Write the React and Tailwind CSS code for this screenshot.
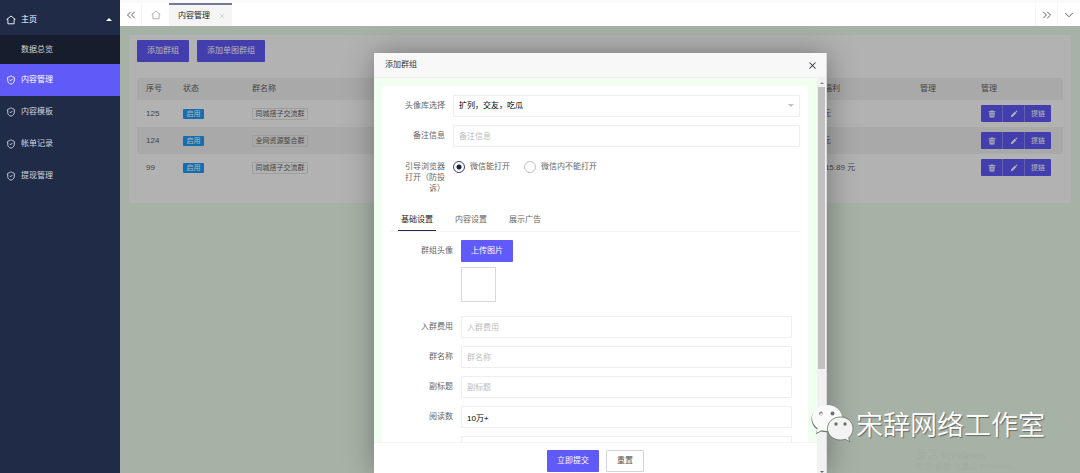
import React, { useState } from 'react'
import { ShieldCheck, ChevronsLeft, ChevronsRight, ChevronDown, X } from 'lucide-react'

const menu = ['内容管理', '内容模板', '帐单记录', '提现管理']

const rows = [
  { id: 125, name: '同城搭子交流群', money: '0 元' },
  { id: 124, name: '全网资源整合群', money: '0 元' },
  { id: 99, name: '同城搭子交流群', money: '1215.89 元' },
]

const tabs = ['基础设置', '内容设置', '展示广告']

const fields = [
  { id: 'fee', label: '入群费用', value: '' },
  { id: 'name', label: '群名称', value: '' },
  { id: 'subtitle', label: '副标题', value: '' },
  { id: 'reads', label: '阅读数', value: '10万+' },
  { id: 'likes', label: '', value: '' },
]

const inputClass = 'block h-[22px] w-full rounded-[1px] border border-[#eeeeee] bg-white px-[5px] text-black outline-none placeholder:text-[#bdbdbd]'

function HomeIcon({ className }) {
  return (
    <svg viewBox="0 0 10 10" className={className} fill="none" stroke="currentColor" strokeWidth="0.9" strokeLinejoin="round">
      <path d="M1.900 4.400H0.800L5 1l4.200 3.400H8.100v4.400H1.900z" />
    </svg>
  )
}

function TrashIcon() {
  return (
    <svg viewBox="0 0 8 8" className="size-2" fill="currentColor">
      <path d="M0.5 1.2h2.2V0.5h2.6v0.7h2.2v1h-7zM1.2 2.7h5.6L6.3 7.5H1.7zM2.7 3.5v3h0.5v-3zm1.1 0v3h0.5v-3zm1.1 0v3h0.5v-3z" fillRule="evenodd" />
    </svg>
  )
}

function PencilIcon() {
  return (
    <svg viewBox="0 0 8 8" className="size-2" fill="currentColor">
      <path d="M0.8 7.2 1.3 5.3 5 1.6 6.4 3 2.7 6.7zM5.5 1.1 6 0.7q0.4-0.3 0.8 0.1l0.4 0.4q0.4 0.4 0 0.8L6.8 2.5z" />
    </svg>
  )
}

function Sidebar() {
  return (
    <nav className="w-[120px] shrink-0 bg-[#202b48] text-white">
      <a href="#home" className="flex h-[35px] items-center pt-1 pl-1.5 pr-2">
        <HomeIcon className="size-[10px]" />
        <span className="ml-[5px] flex-1">主页</span>
        <svg viewBox="0 0 6 3" className="h-[3px] w-1.5" fill="currentColor"><path d="M0 3 3 0l3 3z" /></svg>
      </a>
      <a href="#stats" className="flex h-[29px] items-center bg-[#161e2e] pl-[21px] text-[#d0d2d6]">数据总览</a>
      {menu.map((item, i) => (
        <a
          key={item}
          href={`#menu-${i}`}
          className={i === 0 ? 'flex h-8 items-center bg-[#5f5af8] pl-1.5' : 'flex h-8 items-center pl-1.5 text-[#d2d4da]'}
        >
          <ShieldCheck className="size-[10px]" strokeWidth={2.2} />
          <span className="ml-[5px]">{item}</span>
        </a>
      ))}
    </nav>
  )
}

function TopBar() {
  return (
    <header className="flex h-[26px] shrink-0 border-t-3 border-[#fafafa] bg-white text-[#555]">
      <button type="button" aria-label="左移" className="flex w-[22px] items-center justify-center border-r border-[#f5f5f5]">
        <ChevronsLeft className="size-3.5" strokeWidth={1.6} />
      </button>
      <button type="button" aria-label="首页" className="flex w-[27px] items-center justify-center text-[#aaa]">
        <HomeIcon className="size-[10px]" />
      </button>
      <div className="flex w-[63px] items-center justify-between border-t-2 border-[#737b92] bg-[#f5f5f5] pl-[9px] pr-[7px] text-[#222]">
        内容管理
        <button type="button" aria-label="关闭标签" className="text-[#c4c4c4]"><X className="size-1.5" strokeWidth={3} /></button>
      </div>
      <button type="button" aria-label="右移" className="ml-auto flex w-[23px] items-center justify-center border-x border-[#f5f5f5]">
        <ChevronsRight className="size-3.5" strokeWidth={1.6} />
      </button>
      <button type="button" aria-label="更多" className="flex w-[22px] items-center justify-center">
        <ChevronDown className="size-3.5" strokeWidth={1.6} />
      </button>
    </header>
  )
}

function GroupTable() {
  return (
    <table className="mt-4 w-full table-fixed text-left text-[#666]">
      <colgroup>
        <col className="w-[37px]" />
        <col className="w-[69px]" />
        <col />
        <col className="w-[104px]" />
        <col className="w-[61px]" />
        <col className="w-[91px]" />
      </colgroup>
      <thead>
        <tr className="h-[22px] bg-[#f2f2f2]">
          {['序号', '状态', '群名称', '总福利', '管理', '管理'].map((h, i) => (
            <th key={i} className="px-[9px] font-normal">{h}</th>
          ))}
        </tr>
      </thead>
      <tbody>
        {rows.map(r => (
          <tr key={r.id} className="h-[27px] even:bg-[#f2f2f2]">
            <td className="px-[9px]">{r.id}</td>
            <td className="px-[9px]">
              <span className="block h-2.5 w-[21px] rounded-[1px] bg-[#1e9fff] text-center text-[7px] leading-[10px] text-white">启用</span>
            </td>
            <td className="px-[9px]">
              <span className="block h-3 w-14 rounded-[1px] border border-[#e2e2e2] text-center text-[7px] leading-[10px] whitespace-nowrap">{r.name}</span>
            </td>
            <td className="px-[9px]">{r.money}</td>
            <td />
            <td className="px-[9px]">
              <div className="flex h-[17px] w-[70px] divide-x divide-[#8f8bfa] overflow-hidden rounded-[1px] bg-[#5f5af8] text-white">
                <button type="button" aria-label="删除" className="flex w-[22px] items-center justify-center"><TrashIcon /></button>
                <button type="button" aria-label="编辑" className="flex w-[22px] items-center justify-center"><PencilIcon /></button>
                <button type="button" className="flex-1 text-[7px]">提链</button>
              </div>
            </td>
          </tr>
        ))}
      </tbody>
    </table>
  )
}

function GroupDialog() {
  const [tab, setTab] = useState(0)
  const [open, setOpen] = useState('in')

  return (
    <div role="dialog" aria-label="添加群组" className="flex w-[453px] flex-col border-r border-[#d9d9d9] bg-white shadow-[1px_1px_28px_rgba(0,0,0,0.35)]">
      <div className="flex h-[25px] shrink-0 items-center justify-between border-b border-[#eeeeee] bg-[#f8f8f8] pl-[11px] pr-2 text-[#333]">
        添加群组
        <button type="button" aria-label="关闭" className="text-[#2e2d3c]"><X className="size-[11px]" strokeWidth={2.2} /></button>
      </div>
      <div className="flex min-h-0 flex-1">
        <form className="flex min-w-0 flex-1 flex-col" onSubmit={e => e.preventDefault()}>
          <div className="min-h-0 flex-1 overflow-hidden bg-[#f0fff0] pt-2 pr-[9px] pl-2">
            <div className="bg-white px-2 pt-[9px] text-[#666]">
              <div className="flex items-center">
                <label htmlFor="library" className="w-[63px] pr-2 text-right">头像库选择</label>
                <div className="relative flex-1">
                  <select id="library" className={`${inputClass} appearance-none`}>
                    <option>扩列，交友，吃瓜</option>
                  </select>
                  <svg viewBox="0 0 6 3" className="pointer-events-none absolute top-[9px] right-1.5 h-[3px] w-1.5" fill="#c2c2c2"><path d="M0 0h6L3 3z" /></svg>
                </div>
              </div>
              <div className="mt-2 flex items-center">
                <label htmlFor="remark" className="w-[63px] pr-2 text-right">备注信息</label>
                <div className="flex-1"><input id="remark" placeholder="备注信息" className={inputClass} /></div>
              </div>
              <fieldset className="mt-3.5 flex">
                <div id="open-label" className="w-[63px] shrink-0 pl-3 pr-2 text-right leading-[11px]">引导浏览器打开（防投诉）</div>
                <div role="radiogroup" aria-labelledby="open-label" className="flex h-3 gap-3.5">
                  {[['in', '微信能打开'], ['out', '微信内不能打开']].map(([key, text]) => (
                    <label key={key} className="flex items-center gap-[5px]">
                      <input
                        type="radio"
                        name="open"
                        checked={open === key}
                        onChange={() => setOpen(key)}
                        className="size-3 appearance-none rounded-full border border-[#c2c2c2] checked:border-[#3b4563] checked:bg-[radial-gradient(circle,#16233f_2px,transparent_3px)]"
                      />
                      {text}
                    </label>
                  ))}
                </div>
              </fieldset>
              <div role="tablist" className="mt-4 flex border-b border-[#f4f4f4] pl-2">
                {tabs.map((t, i) => (
                  <button
                    key={t}
                    type="button"
                    role="tab"
                    aria-selected={tab === i}
                    onClick={() => setTab(i)}
                    className={tab === i ? 'mr-4 h-[21px] w-[38px] border-b border-[#202b48] text-[#222]' : 'mr-4 h-[21px] w-[38px] border-b border-transparent'}
                  >
                    {t}
                  </button>
                ))}
              </div>
              <div className="pt-2 pr-2">
                <div className="flex">
                  <span className="h-[22px] w-[71px] pr-2 text-right leading-[22px]">群组头像</span>
                  <div>
                    <button type="button" className="block h-[22px] w-[52px] rounded-[1px] bg-[#5f5af8] text-white">上传图片</button>
                    <div className="mt-[5px] size-[35px] border border-[#d9d9d9]" />
                  </div>
                </div>
                <div className="mt-3.5 space-y-2">
                  {fields.map(f => (
                    <div key={f.id} className="flex items-center">
                      <label htmlFor={f.id} className="w-[71px] pr-2 text-right">{f.label}</label>
                      <div className="flex-1"><input id={f.id} placeholder={f.label} defaultValue={f.value} className={inputClass} /></div>
                    </div>
                  ))}
                </div>
              </div>
            </div>
          </div>
          <div className="flex h-[31px] shrink-0 justify-center gap-[7px] border-t border-[#f4f4f4] bg-white pt-[7px]">
            <button type="submit" className="h-[22px] w-[52px] rounded-[1px] bg-[#5f5af8] text-white">立即提交</button>
            <button type="reset" className="h-[22px] w-[38px] rounded-[1px] border border-[#d4d4d4] text-[#555]">重置</button>
          </div>
        </form>
        <div className="flex w-[9px] shrink-0 flex-col items-center bg-[#f1f1f1] pt-1">
          <svg viewBox="0 0 4 2" className="h-0.5 w-1" fill="#8a8a8a"><path d="M0 2 2 0l2 2z" /></svg>
          <div className="mt-[3px] h-[282px] w-[7px] bg-[#c1c1c1]" />
          <svg viewBox="0 0 4 2" className="mt-auto h-0.5 w-1" fill="#666"><path d="M0 0h4L2 2z" /></svg>
        </div>
      </div>
    </div>
  )
}

function Watermark() {
  return (
    <div className="pointer-events-none absolute right-[35px] bottom-[31px] flex items-end gap-0.5">
      <svg viewBox="0 0 44 38" className="h-[38px] w-11">
        <path d="M17 1.500C8.500 1.500 2 7 2 14.500c0 4.300 2.200 7.800 5.600 10.300L6.200 29.500l5.400-2.800c1.800.5 3.600.8 5.400.8 8.500 0 15-5.800 15-13S25.500 1.500 17 1.500z" transform="translate(-.5 .8)" fill="#6f766f" />
        <path d="M17 1C8.500 1 2 6.500 2 14c0 4.300 2.200 7.800 5.600 10.300L6.200 29l5.400-2.800c1.800.5 3.600.8 5.400.8 8.500 0 15-5.800 15-13S25.500 1 17 1z" fill="#fafafa" />
        <circle cx="11" cy="9.500" r="2" fill="#8c938c" />
        <circle cx="11.400" cy="10.200" r="1.300" fill="#e4e8e4" />
        <circle cx="22.500" cy="9.500" r="2" fill="#6c736c" />
        <path d="M30.500 13C23 13 17.500 18 17.500 24.500S23 36 30.500 36c1.700 0 3.200-.2 4.700-.7l4.600 2.300-1.200-3.800c2.700-2.200 4.400-5.500 4.400-9.300C43 18 37.500 13 30.500 13z" fill="#f3f3f3" stroke="#6a706a" strokeWidth="0.8" />
        <circle cx="26" cy="20" r="1.700" fill="#6c736c" />
        <circle cx="35" cy="20" r="1.700" fill="#6c736c" />
      </svg>
      <span className="text-[27px] font-[350] leading-8 text-white [text-shadow:1px_1px_1px_#666]">宋辞网络工作室</span>
    </div>
  )
}

export default function App() {
  return (
    <div className="relative flex h-screen overflow-hidden font-['Liberation_Sans','Noto_Sans_CJK_SC',sans-serif] text-[8px] leading-3">
      <Sidebar />
      <div className="flex min-w-0 flex-1 flex-col">
        <TopBar />
        <main className="relative min-h-0 flex-1 bg-[#f0fff0] p-[9px]">
          <section className="bg-white px-2 pt-[5px] pb-[22px]">
            <div className="flex gap-2">
              <button type="button" className="h-[22px] w-[52px] rounded-[1px] bg-[#5f5af8] text-white">添加群组</button>
              <button type="button" className="h-[22px] w-[68px] rounded-[1px] bg-[#5f5af8] text-white">添加单图群组</button>
            </div>
            <GroupTable />
          </section>
          <div className="absolute inset-0 flex justify-center bg-black/30 pt-[27px] pl-px">
            <GroupDialog />
          </div>
          <div className="absolute right-[54px] bottom-0 w-[110px] whitespace-nowrap text-[#a2aca3]">
            <div className="text-[11px]">激活 Windows</div>
            <div>转到“设置”以激活 Windows。</div>
          </div>
        </main>
      </div>
      <Watermark />
    </div>
  )
}
